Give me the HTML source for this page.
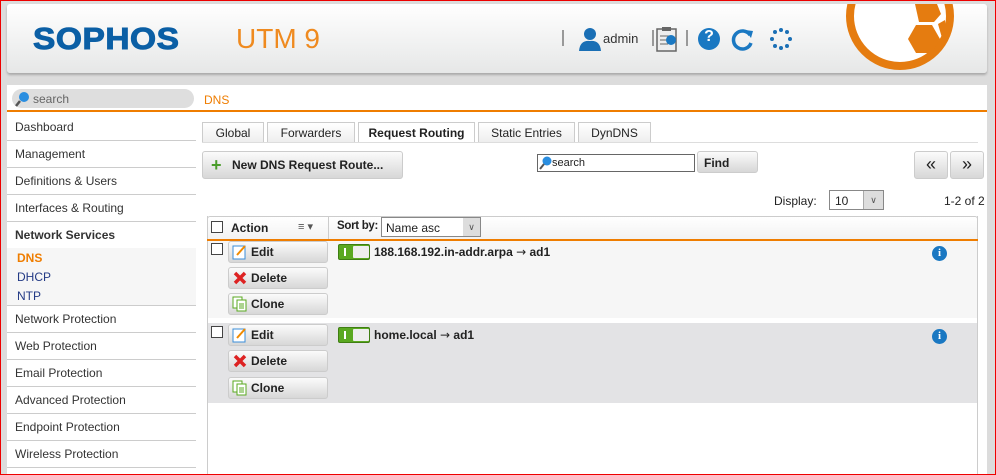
<!DOCTYPE html>
<html><head><style>
*{box-sizing:border-box;margin:0;padding:0}
body{width:996px;height:475px;overflow:hidden;background:#dcdcdc;font-family:"Liberation Sans",Arial,sans-serif;font-size:12px;color:#222;position:relative}
.a{position:absolute}
#frame{left:0;top:0;width:996px;height:475px;border:1px solid #e00;z-index:50;pointer-events:none}
#hdr{left:7px;top:4px;width:980px;height:69px;background:linear-gradient(#fff,#e6e7e7);border-radius:3px;box-shadow:0 2px 2px #aaa;overflow:hidden}
#main{left:7px;top:85px;width:980px;height:390px;background:#fff}
.nav{left:7px;width:189px;height:27px;border-bottom:1px solid #ccc;padding:6px 0 0 8px;color:#333;font-size:12px}
.btn{background:linear-gradient(#fbfbfb,#d7d7d7);border:1px solid #ccc;border-radius:3px;font-weight:bold;font-size:12px}
.tab{top:122px;height:20px;border:1px solid #ccc;border-bottom:none;background:linear-gradient(#fff,#eee);text-align:center;padding-top:3px;font-size:12px}
.sm{font-weight:bold;font-size:12px;padding:3px 0 0 22px;width:100px;height:22px}
.tog{width:32px;height:16px;background:#5aa820;border:1px solid #3f7e12;border-radius:2px}
.tog i{position:absolute;left:14px;top:1px;width:16px;height:12px;background:#eee;border-radius:1px}
.tog b{position:absolute;left:5px;top:3px;width:2px;height:8px;background:#fff}
.info{width:15px;height:15px;border-radius:50%;background:#1a78c2;color:#fff;font:bold 11px "Liberation Serif",serif;text-align:center;line-height:15px}
.cb{width:12px;height:12px;border:1px solid #444;background:#fff}
</style></head><body>
<div id="frame" class="a"></div>
<div id="hdr" class="a">
 <div class="a" style="left:26px;top:17px;font:900 31px 'Liberation Sans',sans-serif;color:#0b5fa5;letter-spacing:0.5px;transform:scaleX(1.08);transform-origin:left;-webkit-text-stroke:1px #0b5fa5">SOPHOS</div>
 <div class="a" style="left:229px;top:19px;font:normal 28px 'Liberation Sans',sans-serif;color:#ef8a1f">UTM 9</div>
 <div class="a" style="left:555px;top:26px;width:2px;height:16px;background:#999"></div>
 <svg class="a" style="left:571px;top:23px" width="24" height="24"><circle cx="12" cy="7" r="6" fill="#1a6fb5"/><path d="M1 24 Q2 13 12 14 Q22 13 23 24Z" fill="#1a6fb5"/></svg>
 <div class="a" style="left:596px;top:27px;color:#333;font-size:13px">admin</div>
 <div class="a" style="left:645px;top:26px;width:2px;height:16px;background:#999"></div>
 <svg class="a" style="left:649px;top:22px" width="22" height="26"><rect x="1" y="3" width="19" height="22" fill="#eee" stroke="#666" stroke-width="1.5"/><rect x="6" y="1" width="9" height="4" fill="#666"/><path d="M4 10h12M4 14h12M4 18h8" stroke="#666"/><circle cx="15" cy="14" r="5" fill="#1a78c2"/></svg>
 <div class="a" style="left:679px;top:26px;width:2px;height:16px;background:#999"></div>
 <div class="a info" style="left:691px;top:24px;width:22px;height:22px;line-height:22px;font:bold 16px 'Liberation Sans',sans-serif">?</div>
 <svg class="a" style="left:724px;top:23px" width="24" height="24"><path d="M19 8 A9 9 0 1 0 20 16" fill="none" stroke="#1a78c2" stroke-width="3.5"/><path d="M14 3 L22 4 L20 11Z" fill="#1a78c2"/></svg>
 <svg class="a" style="left:762px;top:23px" width="24" height="24"><g fill="#1a6fb5"><circle cx="12" cy="3" r="2"/><circle cx="18" cy="5" r="2"/><circle cx="21" cy="12" r="2"/><circle cx="18" cy="19" r="2"/><circle cx="12" cy="21" r="2"/><circle cx="6" cy="19" r="2"/><circle cx="3" cy="12" r="2"/><circle cx="6" cy="5" r="2"/></g></svg>
 <svg class="a" style="left:830px;top:-40px" width="140" height="115"><circle cx="63" cy="52" r="50" fill="#fff" stroke="#e57c10" stroke-width="8"/><polygon points="79,61 95,61 103,75 95,89 79,89 71,75" fill="#e57c10"/><polygon points="78,40 100,40 104,50 97,58 82,58" fill="#e57c10"/><polygon points="101,60 108,56 110,72 105,74" fill="#e57c10"/></svg>
</div>
<div id="main" class="a"></div>
<div class="a" style="left:12px;top:89px;width:182px;height:19px;background:#dedede;border-radius:10px;color:#666;padding:3px 0 0 21px;font-size:12px">search</div>
<svg class="a" style="left:14px;top:90px" width="18" height="18"><circle cx="10" cy="7" r="5" fill="#2a8ee0"/><path d="M6 11 L2 16" stroke="#555" stroke-width="2.5"/></svg>
<div class="a" style="left:204px;top:93px;color:#ef7d00;font-size:12px">DNS</div>
<div class="a" style="left:7px;top:110px;width:980px;height:2px;background:#ef7d00"></div>
<div class="a nav" style="top:114px">Dashboard</div>
<div class="a nav" style="top:141px">Management</div>
<div class="a nav" style="top:168px">Definitions &amp; Users</div>
<div class="a nav" style="top:195px">Interfaces &amp; Routing</div>
<div class="a nav" style="top:222px;height:29px;border:none;font-weight:bold">Network Services</div>
<div class="a" style="left:7px;top:248px;width:189px;height:58px;background:#f6f6f6;border-bottom:1px solid #ccc"></div>
<div class="a" style="left:17px;top:251px;color:#ef7d00;font-weight:bold">DNS</div>
<div class="a" style="left:17px;top:270px;color:#233a85">DHCP</div>
<div class="a" style="left:17px;top:289px;color:#233a85">NTP</div>
<div class="a nav" style="top:306px">Network Protection</div>
<div class="a nav" style="top:333px">Web Protection</div>
<div class="a nav" style="top:360px">Email Protection</div>
<div class="a nav" style="top:387px">Advanced Protection</div>
<div class="a nav" style="top:414px">Endpoint Protection</div>
<div class="a nav" style="top:441px">Wireless Protection</div>
<div class="a" style="left:1px;top:112px;width:6px;height:363px;background:#dcdcdc"></div>

<div class="a tab" style="left:202px;width:62px">Global</div>
<div class="a tab" style="left:267px;width:88px">Forwarders</div>
<div class="a tab" style="left:358px;width:117px;font-weight:bold;background:#fff;height:21px">Request Routing</div>
<div class="a tab" style="left:478px;width:97px">Static Entries</div>
<div class="a tab" style="left:578px;width:73px">DynDNS</div>
<div class="a" style="left:202px;top:142px;width:776px;height:1px;background:#ddd"></div>

<div class="a btn" style="left:202px;top:151px;width:201px;height:28px;padding:6px 0 0 29px">New DNS Request Route...</div>
<div class="a" style="left:211px;top:158px;color:#4a9d2a;font:bold 18px 'Liberation Sans';line-height:14px">+</div>
<div class="a" style="left:537px;top:154px;width:158px;height:18px;border:1px solid #666;background:#fff;padding:2px 0 0 14px;font-size:11px">search</div>
<svg class="a" style="left:538px;top:155px" width="16" height="16"><circle cx="9" cy="6" r="4.5" fill="#2a8ee0"/><path d="M6 9 L2 14" stroke="#555" stroke-width="2"/></svg>
<div class="a btn" style="left:697px;top:151px;width:61px;height:22px;padding:4px 0 0 6px">Find</div>
<div class="a btn" style="left:914px;top:151px;width:34px;height:28px;text-align:center;font-size:18px;line-height:24px;font-weight:normal">«</div>
<div class="a btn" style="left:950px;top:151px;width:34px;height:28px;text-align:center;font-size:18px;line-height:24px;font-weight:normal">»</div>
<div class="a" style="left:774px;top:194px;color:#222">Display:</div>
<div class="a" style="left:829px;top:190px;width:55px;height:20px;border:1px solid #888;background:#fff;padding:3px 0 0 5px">10</div>
<div class="a" style="left:863px;top:191px;width:20px;height:18px;background:#ddd;border-left:1px solid #aaa;text-align:center;font-size:9px;line-height:18px;color:#555">&#8744;</div>
<div class="a" style="left:944px;top:194px">1-2 of 2</div>

<div class="a" style="left:207px;top:216px;width:771px;height:259px;border-left:1px solid #ccc;border-right:1px solid #ccc"></div>
<div class="a" style="left:207px;top:216px;width:771px;height:24px;border:1px solid #ccc;border-bottom:none;background:linear-gradient(#fff,#f2f2f2);border-radius:3px 3px 0 0"></div>
<div class="a" style="left:328px;top:216px;width:1px;height:24px;background:#ccc"></div>
<div class="a cb" style="left:211px;top:221px"></div>
<div class="a" style="left:231px;top:221px;font-weight:bold">Action</div>
<div class="a" style="left:298px;top:220px;font-size:11px;color:#555">&#8801; &#9662;</div>
<div class="a" style="left:337px;top:220px;font-weight:bold;font-size:11.5px;letter-spacing:-0.3px">Sort by:</div>
<div class="a" style="left:381px;top:217px;width:100px;height:20px;border:1px solid #888;background:#fff;padding:3px 0 0 4px">Name asc</div>
<div class="a" style="left:463px;top:218px;width:17px;height:18px;background:#ddd;text-align:center;font-size:9px;line-height:18px;color:#555">&#8744;</div>
<div class="a" style="left:207px;top:239px;width:771px;height:2px;background:#ef7d00"></div>

<div class="a" style="left:208px;top:241px;width:769px;height:77px;background:#f6f6f6"></div>
<div class="a" style="left:208px;top:323px;width:769px;height:80px;background:#e3e3e5"></div>

<div class="a cb" style="left:211px;top:243px"></div>
<div class="a btn sm" style="left:228px;top:241px">Edit</div>
<div class="a btn sm" style="left:228px;top:267px">Delete</div>
<div class="a btn sm" style="left:228px;top:293px">Clone</div>
<div class="a tog" style="left:338px;top:244px"><b></b><i></i></div>
<div class="a" style="left:374px;top:245px;font-weight:bold">188.168.192.in-addr.arpa <span style="font-weight:normal;font-family:'DejaVu Sans'">→</span> ad1</div>
<div class="a info" style="left:932px;top:246px">i</div>

<div class="a cb" style="left:211px;top:326px"></div>
<div class="a btn sm" style="left:228px;top:324px">Edit</div>
<div class="a btn sm" style="left:228px;top:350px">Delete</div>
<div class="a btn sm" style="left:228px;top:377px">Clone</div>
<div class="a tog" style="left:338px;top:327px"><b></b><i></i></div>
<div class="a" style="left:374px;top:328px;font-weight:bold">home.local <span style="font-weight:normal;font-family:'DejaVu Sans'">→</span> ad1</div>
<div class="a info" style="left:932px;top:329px">i</div>

<svg class="a" style="left:232px;top:244px" width="16" height="16"><rect x="1" y="2" width="12" height="13" fill="#fff" stroke="#3b8ed8"/><path d="M5 11 L13 2" stroke="#f08a00" stroke-width="2"/></svg>
<svg class="a" style="left:232px;top:327px" width="16" height="16"><rect x="1" y="2" width="12" height="13" fill="#fff" stroke="#3b8ed8"/><path d="M5 11 L13 2" stroke="#f08a00" stroke-width="2"/></svg>
<svg class="a" style="left:232px;top:270px" width="16" height="16"><path d="M3 3 L13 13 M13 3 L3 13" stroke="#d22" stroke-width="3.5"/></svg>
<svg class="a" style="left:232px;top:353px" width="16" height="16"><path d="M3 3 L13 13 M13 3 L3 13" stroke="#d22" stroke-width="3.5"/></svg>
<svg class="a" style="left:232px;top:296px" width="16" height="16"><rect x="1" y="1" width="9" height="11" fill="#fff" stroke="#5aa820"/><rect x="5" y="4" width="9" height="11" fill="#fff" stroke="#5aa820"/><path d="M7 8h5M7 10h5M7 12h5" stroke="#5aa820"/></svg>
<svg class="a" style="left:232px;top:380px" width="16" height="16"><rect x="1" y="1" width="9" height="11" fill="#fff" stroke="#5aa820"/><rect x="5" y="4" width="9" height="11" fill="#fff" stroke="#5aa820"/><path d="M7 8h5M7 10h5M7 12h5" stroke="#5aa820"/></svg>
</body></html>
